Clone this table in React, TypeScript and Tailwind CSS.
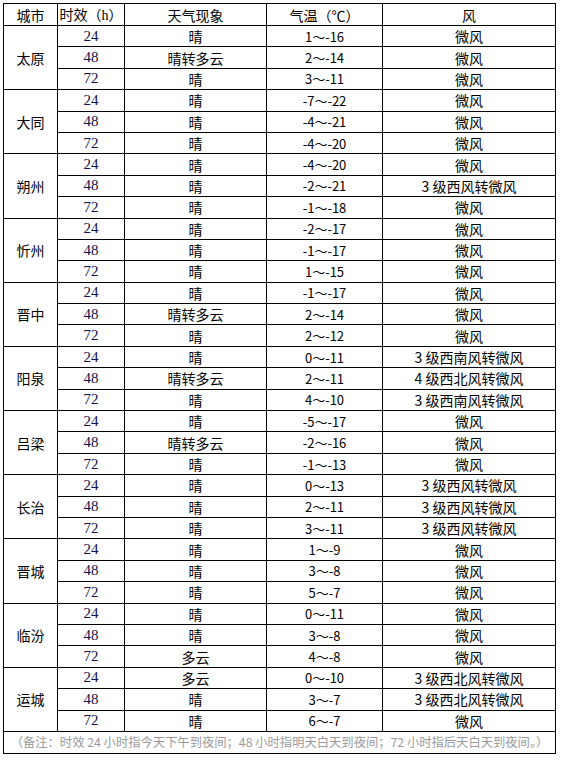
import React from "react";

type Row = [string, string, string, string];

const cities: { name: string; rows: Row[] }[] = [
  { name: "太原", rows: [["24", "晴", "1～-16", "微风"], ["48", "晴转多云", "2～-14", "微风"], ["72", "晴", "3～-11", "微风"]] },
  { name: "大同", rows: [["24", "晴", "-7～-22", "微风"], ["48", "晴", "-4～-21", "微风"], ["72", "晴", "-4～-20", "微风"]] },
  { name: "朔州", rows: [["24", "晴", "-4～-20", "微风"], ["48", "晴", "-2～-21", "3 级西风转微风"], ["72", "晴", "-1～-18", "微风"]] },
  { name: "忻州", rows: [["24", "晴", "-2～-17", "微风"], ["48", "晴", "-1～-17", "微风"], ["72", "晴", "1～-15", "微风"]] },
  { name: "晋中", rows: [["24", "晴", "-1～-17", "微风"], ["48", "晴转多云", "2～-14", "微风"], ["72", "晴", "2～-12", "微风"]] },
  { name: "阳泉", rows: [["24", "晴", "0～-11", "3 级西南风转微风"], ["48", "晴转多云", "2～-11", "4 级西北风转微风"], ["72", "晴", "4～-10", "3 级西南风转微风"]] },
  { name: "吕梁", rows: [["24", "晴", "-5～-17", "微风"], ["48", "晴转多云", "-2～-16", "微风"], ["72", "晴", "-1～-13", "微风"]] },
  { name: "长治", rows: [["24", "晴", "0～-13", "3 级西风转微风"], ["48", "晴", "2～-11", "3 级西风转微风"], ["72", "晴", "3～-11", "3 级西风转微风"]] },
  { name: "晋城", rows: [["24", "晴", "1～-9", "微风"], ["48", "晴", "3～-8", "微风"], ["72", "晴", "5～-7", "微风"]] },
  { name: "临汾", rows: [["24", "晴", "0～-11", "微风"], ["48", "晴", "3～-8", "微风"], ["72", "多云", "4～-8", "微风"]] },
  { name: "运城", rows: [["24", "多云", "0～-10", "3 级西北风转微风"], ["48", "晴", "3～-7", "3 级西北风转微风"], ["72", "晴", "6～-7", "微风"]] },
];

const cell = "border border-black text-center p-0 leading-none font-normal";

export default function App() {
  return (
    <div className="w-[561px] h-[761px] bg-white pt-[3px] pl-[3px] text-[14px] text-black [font-family:'Noto_Sans_CJK_SC','Liberation_Sans',sans-serif]">
      <table className="border-collapse table-fixed w-[552px]">
        <colgroup>
          <col className="w-[54px]" />
          <col className="w-[67px]" />
          <col className="w-[142px]" />
          <col className="w-[116px]" />
          <col className="w-[173px]" />
        </colgroup>
        <thead>
          <tr className="h-[22px]">
            <th className={cell}>城市</th>
            <th className={cell}>
              时效（<span className="[font-family:'Liberation_Serif',serif]">h</span>）
            </th>
            <th className={cell}>天气现象</th>
            <th className={cell}>气温（℃）</th>
            <th className={cell}>风</th>
          </tr>
        </thead>
        <tbody>
          {cities.map((city) =>
            city.rows.map((row, i) => (
              <tr key={city.name + row[0]} className="h-[21.4px]">
                {i === 0 && (
                  <td rowSpan={3} className={cell}>
                    {city.name}
                  </td>
                )}
                <td className={`${cell} text-[#10104a] [font-family:'Liberation_Serif',serif] text-[15px]`}>{row[0]}</td>
                <td className={cell}>{row[1]}</td>
                <td className={`${cell} text-[13px]`}>{row[2]}</td>
                <td className={cell}>{row[3]}</td>
              </tr>
            ))
          )}
          <tr className="h-[22px]">
            <td colSpan={5} className={`${cell} text-[12.3px] text-[#9a9a9a] whitespace-nowrap`}>
              （备注：时效 24 小时指今天下午到夜间；48 小时指明天白天到夜间；72 小时指后天白天到夜间。）
            </td>
          </tr>
        </tbody>
      </table>
    </div>
  );
}
